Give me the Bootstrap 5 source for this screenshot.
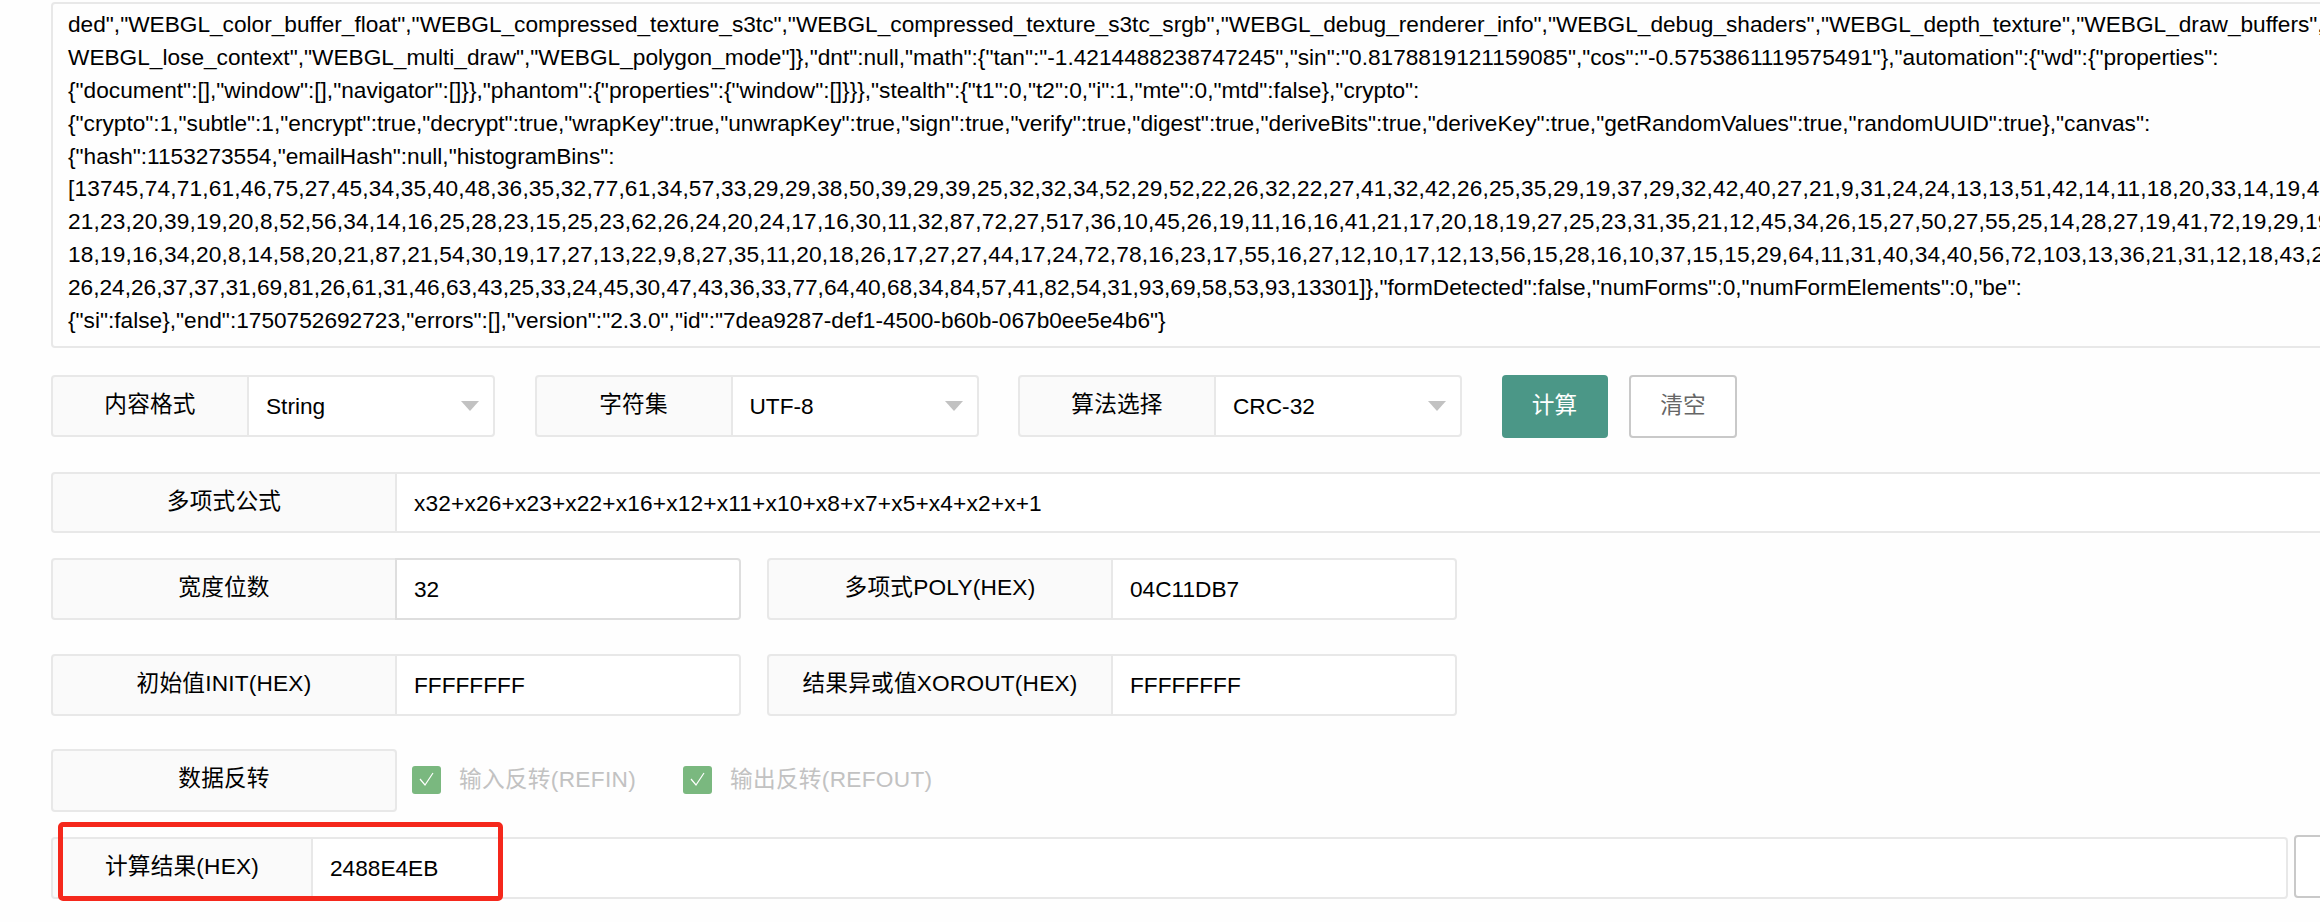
<!DOCTYPE html>
<html lang="zh-CN">
<head>
<meta charset="utf-8">
<title>CRC</title>
<link href="https://cdn.jsdelivr.net/npm/bootstrap@5.3.0/dist/css/bootstrap.min.css" rel="stylesheet">
<style>
html,body{height:922px;overflow:hidden;background:#fefefe}
body{font-family:"Liberation Sans","Noto Sans CJK SC",sans-serif;font-size:22.67px;color:#000}
.sheet{width:2400px;padding:2px 0 0 51px;position:relative}
.dump{height:346px;overflow:hidden;border:2px solid #e8e8e8;border-radius:4px;padding:0 0 0 15px;line-height:32.9px;font-size:22.67px;white-space:nowrap;margin-bottom:27px;color:#000}
.dump-in{margin-top:-29px}
.nums{letter-spacing:.17px}
.fld{height:62px;flex-wrap:nowrap}
.fld .input-group-text,.fld .form-control,.fld .fake-select{font-size:22.67px;line-height:1.5;border:2px solid #e8e8e8;border-radius:4px;color:#000;height:100%}
.fld .input-group-text{background:#fafafa;justify-content:center;padding:0 4px 4px;flex:none;letter-spacing:.2px}
.fld .form-control{background:#fff;padding:0 0 0 17px;display:flex;align-items:center;flex:1 1 auto;min-width:0;margin-left:-2px!important}
.fld .form-control.on{border-color:#dedede}
.fake-select{background:#fff;padding:0 0 0 17px;display:flex;align-items:center;justify-content:space-between;flex:1 1 auto;margin-left:-2px!important;border-top-left-radius:0!important;border-bottom-left-radius:0!important}
.tri{width:0;height:0;border-left:9px solid transparent;border-right:9px solid transparent;border-top:10px solid #c2c2c2;margin:0 14px 0 0}
.w-sel{width:444px}
.w-sel .input-group-text{width:198px}
.w-half{width:690px}
.w-half .input-group-text{width:346px}
.w-full .input-group-text{width:346px}
.go{width:106px;height:63px;background:#4b9787;color:#fff;border:0;border-radius:4px;font-size:22.67px;padding:0 0 4px}
.go:hover{background:#4b9787;color:#fff}
.wipe{width:108px;height:63px;background:#fff;color:#666;border:2px solid #c9c9c9;border-radius:4px;font-size:22.67px;padding:0 0 4px;margin-left:-18px}
.tick{width:29px;height:28px;background:#7ab87f;border-radius:3px;display:flex;align-items:center;justify-content:center;flex:none;margin-left:15px}
.tick-lbl{color:#c2c2c2;font-size:22.67px;margin-left:18px;margin-bottom:2px;letter-spacing:.3px}
.tick.tick2{margin-left:47px}
.row-a{margin-bottom:34px;column-gap:39.5px;align-items:flex-start}
.fld.row-b{height:61px;margin-bottom:25px}
.row-c{margin-bottom:34px;column-gap:26px}
.row-c2{margin-bottom:32px}
.row-d{margin-bottom:26px;height:63px}
.row-e{column-gap:6px}
.w-flag{width:346px;flex:none}
.w-flag .input-group-text{width:346px;height:63px}
.w-res .input-group-text{width:262px}
.clear-sm{width:106px;height:63px;background:#fff;border:2px solid #c9c9c9;border-radius:4px;flex:none;margin-top:-2px}
.redbox{position:absolute;left:58px;top:822px;width:445px;height:79px;border:5px solid #f5281c;border-radius:5px;pointer-events:none}
</style>
</head>
<body>
<main class="sheet">
  <div class="dump"><div class="dump-in">
    <div>EXT_texture_filter_anisotropic","KHR_parallel_shader_compile","OES_element_index_uint","OES_fbo_render_mipmap","OES_standard_derivatives","OES_texture_float","OES_texture_float_linear","OES_texture_half_float","OES_texture_half_float_linear","OES_vertex_array_object","WEBGL_blend_func_exten</div>
    <div>ded","WEBGL_color_buffer_float","WEBGL_compressed_texture_s3tc","WEBGL_compressed_texture_s3tc_srgb","WEBGL_debug_renderer_info","WEBGL_debug_shaders","WEBGL_depth_texture","WEBGL_draw_buffers",</div>
    <div>WEBGL_lose_context","WEBGL_multi_draw","WEBGL_polygon_mode"]},"dnt":null,"math":{"tan":"-1.4214488238747245","sin":"0.8178819121159085","cos":"-0.5753861119575491"},"automation":{"wd":{"properties":</div>
    <div>{"document":[],"window":[],"navigator":[]}},"phantom":{"properties":{"window":[]}}},"stealth":{"t1":0,"t2":0,"i":1,"mte":0,"mtd":false},"crypto":</div>
    <div>{"crypto":1,"subtle":1,"encrypt":true,"decrypt":true,"wrapKey":true,"unwrapKey":true,"sign":true,"verify":true,"digest":true,"deriveBits":true,"deriveKey":true,"getRandomValues":true,"randomUUID":true},"canvas":</div>
    <div>{"hash":1153273554,"emailHash":null,"histogramBins":</div>
    <div class="nums">[13745,74,71,61,46,75,27,45,34,35,40,48,36,35,32,77,61,34,57,33,29,29,38,50,39,29,39,25,32,32,34,52,29,52,22,26,32,22,27,41,32,42,26,25,35,29,19,37,29,32,42,40,27,21,9,31,24,24,13,13,51,42,14,11,18,20,33,14,19,41,22</div>
    <div class="nums">21,23,20,39,19,20,8,52,56,34,14,16,25,28,23,15,25,23,62,26,24,20,24,17,16,30,11,32,87,72,27,517,36,10,45,26,19,11,16,16,41,21,17,20,18,19,27,25,23,31,35,21,12,45,34,26,15,27,50,27,55,25,14,28,27,19,41,72,19,29,19,22</div>
    <div class="nums">18,19,16,34,20,8,14,58,20,21,87,21,54,30,19,17,27,13,22,9,8,27,35,11,20,18,26,17,27,27,44,17,24,72,78,16,23,17,55,16,27,12,10,17,12,13,56,15,28,16,10,37,15,15,29,64,11,31,40,34,40,56,72,103,13,36,21,31,12,18,43,28,19</div>
    <div>26,24,26,37,37,31,69,81,26,61,31,46,63,43,25,33,24,45,30,47,43,36,33,77,64,40,68,34,84,57,41,82,54,31,93,69,58,53,93,13301]},"formDetected":false,"numForms":0,"numFormElements":0,"be":</div>
    <div>{"si":false},"end":1750752692723,"errors":[],"version":"2.3.0","id":"7dea9287-def1-4500-b60b-067b0ee5e4b6"}</div>
  </div></div>

  <div class="d-flex row-a">
    <div class="input-group fld w-sel"><span class="input-group-text">内容格式</span><div class="fake-select">String<span class="tri"></span></div></div>
    <div class="input-group fld w-sel"><span class="input-group-text">字符集</span><div class="fake-select">UTF-8<span class="tri"></span></div></div>
    <div class="input-group fld w-sel"><span class="input-group-text">算法选择</span><div class="fake-select">CRC-32<span class="tri"></span></div></div>
    <button type="button" class="btn go">计算</button>
    <button type="button" class="btn wipe">清空</button>
  </div>

  <div class="input-group fld w-full row-b"><span class="input-group-text">多项式公式</span><div class="form-control nums">x32+x26+x23+x22+x16+x12+x11+x10+x8+x7+x5+x4+x2+x+1</div></div>

  <div class="d-flex row-c">
    <div class="input-group fld w-half"><span class="input-group-text">宽度位数</span><div class="form-control on">32</div></div>
    <div class="input-group fld w-half"><span class="input-group-text">多项式POLY(HEX)</span><div class="form-control">04C11DB7</div></div>
  </div>

  <div class="d-flex row-c row-c2">
    <div class="input-group fld w-half"><span class="input-group-text">初始值INIT(HEX)</span><div class="form-control">FFFFFFFF</div></div>
    <div class="input-group fld w-half"><span class="input-group-text">结果异或值XOROUT(HEX)</span><div class="form-control">FFFFFFFF</div></div>
  </div>

  <div class="d-flex align-items-center row-d">
    <div class="input-group fld w-flag"><span class="input-group-text">数据反转</span></div>
    <span class="tick"><svg width="19" height="17" viewBox="0 0 19 17"><path d="M3 8l5 6 8-12" fill="none" stroke="#fff" stroke-width="1.2"/></svg></span>
    <span class="tick-lbl">输入反转(REFIN)</span>
    <span class="tick tick2"><svg width="19" height="17" viewBox="0 0 19 17"><path d="M3 8l5 6 8-12" fill="none" stroke="#fff" stroke-width="1.2"/></svg></span>
    <span class="tick-lbl">输出反转(REFOUT)</span>
  </div>

  <div class="d-flex row-e">
    <div class="input-group fld w-res flex-grow-1"><span class="input-group-text">计算结果(HEX)</span><div class="form-control">2488E4EB</div></div>
    <div class="clear-sm"></div>
  </div>
  <div class="redbox"></div>
</main>
</body>
</html>
